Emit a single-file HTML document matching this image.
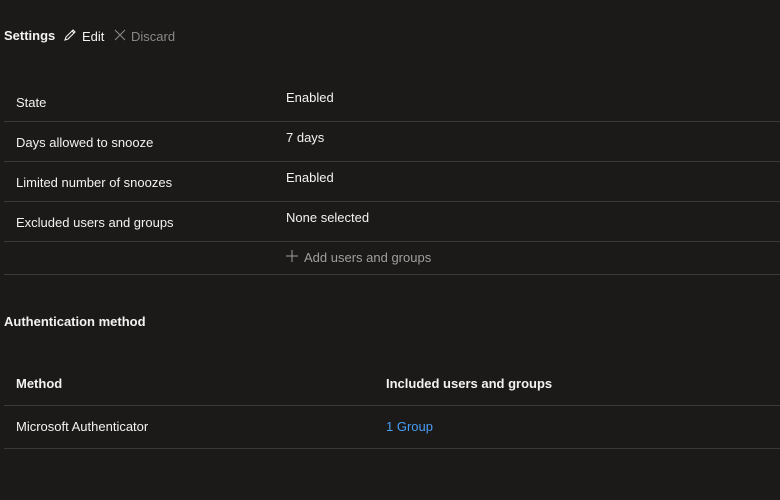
<!DOCTYPE html>
<html><head><style>
body{margin:0;width:780px;height:500px;background:#1b1a19;font-family:"Liberation Sans",sans-serif;font-size:13px;color:#f3f2f1;position:relative;overflow:hidden}
.a{position:absolute;white-space:nowrap}
.l{position:absolute;left:4px;right:0;height:1px;background:#3b3a39}
b{font-weight:bold}
</style></head><body>
<div class="a" style="left:4px;top:28px;font-weight:bold">Settings</div>
<svg class="a" style="left:63px;top:28px" width="14" height="14" viewBox="0 0 14 14"><path d="M2 12 L3 9 L10 2 L12 4 L5 11 Z M9 3 L11 5" stroke="#f3f2f1" fill="none" stroke-width="1.1"/></svg>
<div class="a" style="left:82px;top:29px">Edit</div>
<svg class="a" style="left:114px;top:29px" width="12" height="12" viewBox="0 0 12 12"><path d="M1 1L11 11M11 1L1 11" stroke="#8a8886" stroke-width="1.1"/></svg>
<div class="a" style="left:131px;top:29px;color:#8a8886">Discard</div>

<div class="a" style="left:16px;top:95px">State</div>
<div class="a" style="left:286px;top:90px">Enabled</div>
<div class="l" style="top:121px"></div>
<div class="a" style="left:16px;top:135px">Days allowed to snooze</div>
<div class="a" style="left:286px;top:130px">7 days</div>
<div class="l" style="top:161px"></div>
<div class="a" style="left:16px;top:175px">Limited number of snoozes</div>
<div class="a" style="left:286px;top:170px">Enabled</div>
<div class="l" style="top:201px"></div>
<div class="a" style="left:16px;top:215px">Excluded users and groups</div>
<div class="a" style="left:286px;top:210px">None selected</div>
<div class="l" style="top:241px"></div>
<svg class="a" style="left:286px;top:250px" width="12" height="12" viewBox="0 0 12 12"><path d="M6 0V12M0 6H12" stroke="#a19f9d" stroke-width="1"/></svg>
<div class="a" style="left:304px;top:250px;color:#a19f9d">Add users and groups</div>
<div class="l" style="top:274px"></div>

<div class="a" style="left:4px;top:314px;font-weight:bold">Authentication method</div>
<div class="a" style="left:16px;top:376px;font-weight:bold">Method</div>
<div class="a" style="left:386px;top:376px;font-weight:bold">Included users and groups</div>
<div class="l" style="top:405px"></div>
<div class="a" style="left:16px;top:419px">Microsoft Authenticator</div>
<div class="a" style="left:386px;top:419px;color:#479ef5">1 Group</div>
<div class="l" style="top:448px"></div>
</body></html>
